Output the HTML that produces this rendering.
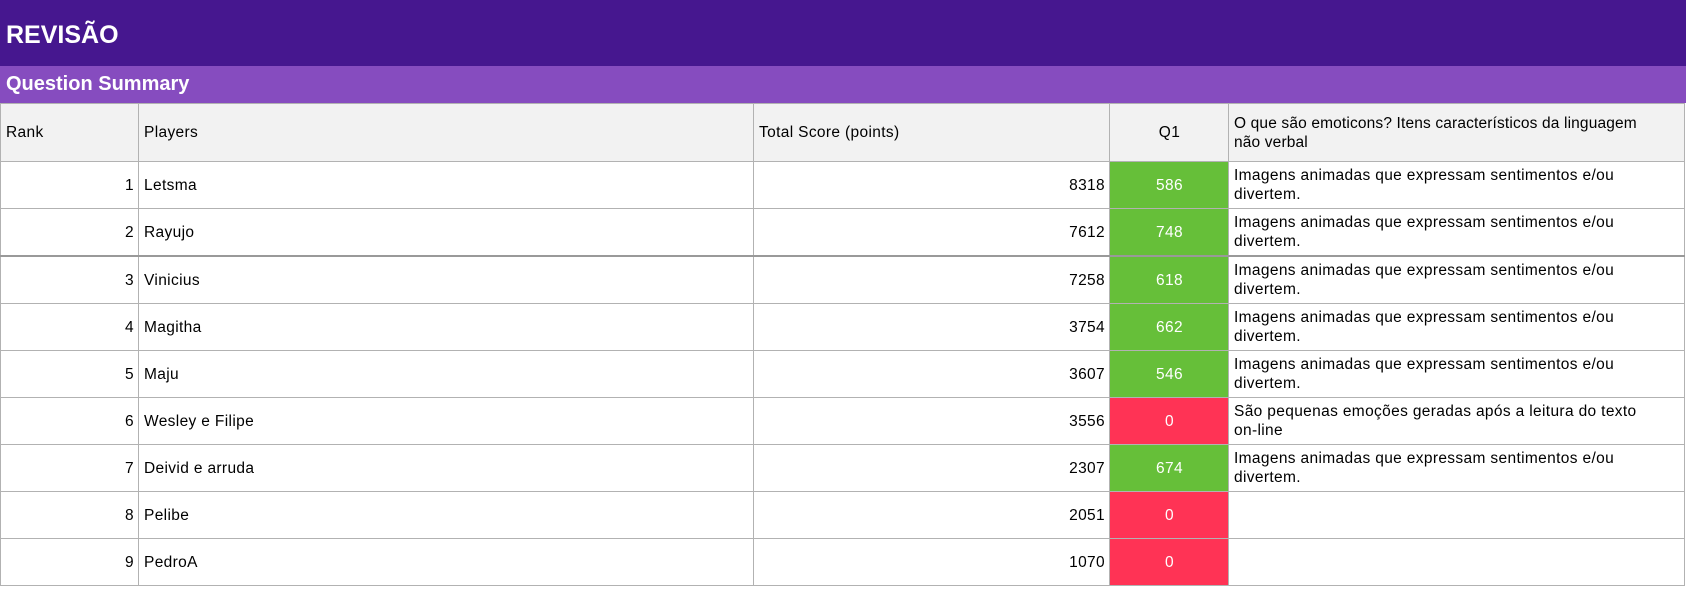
<!DOCTYPE html>
<html><head><meta charset="utf-8"><style>
body{margin:0;width:1686px;height:593px;background:#fff;font-family:"Liberation Sans",Arial,sans-serif;overflow:hidden;position:relative}
.t1{position:absolute;left:0;top:0;width:1686px;height:66px;background:#46178f;color:#fff;font-weight:bold;font-size:25px;line-height:70px;padding-left:6px;box-sizing:border-box}
.t2{position:absolute;left:0;top:66px;width:1686px;height:37px;background:#864cbf;color:#fff;font-weight:bold;font-size:20px;line-height:37px;padding-left:6px;box-sizing:border-box}
table{position:absolute;left:0;top:103px;border-collapse:collapse;table-layout:fixed;font-size:15.5px;letter-spacing:0.35px;color:#000}
td{border:1px solid #b2b2b2;padding:0 4px 0 5px;height:46px;line-height:19px;overflow:hidden;white-space:nowrap}
tr.h td{background:#f2f2f2;height:57px}
.r{text-align:right}.c{text-align:center;color:#fff}
.g{background:#66bf39}.x{background:#ff3355}
tr.b td{border-bottom:2px solid #999}
</style></head><body>
<div class="t1">REVISÃO</div>
<div class="t2">Question Summary</div>
<table>
<colgroup><col style="width:138px"><col style="width:615px"><col style="width:356px"><col style="width:119px"><col style="width:456px"></colgroup>
<tr class="h"><td>Rank</td><td>Players</td><td>Total Score (points)</td><td style="text-align:center">Q1</td><td style="letter-spacing:0.15px">O que são emoticons? Itens característicos da linguagem<br>não verbal</td></tr>
<tr><td class="r">1</td><td>Letsma</td><td class="r">8318</td><td class="c g">586</td><td>Imagens animadas que expressam sentimentos e/ou<br>divertem.</td></tr>
<tr class="b"><td class="r">2</td><td>Rayujo</td><td class="r">7612</td><td class="c g">748</td><td>Imagens animadas que expressam sentimentos e/ou<br>divertem.</td></tr>
<tr><td class="r">3</td><td>Vinicius</td><td class="r">7258</td><td class="c g">618</td><td>Imagens animadas que expressam sentimentos e/ou<br>divertem.</td></tr>
<tr><td class="r">4</td><td>Magitha</td><td class="r">3754</td><td class="c g">662</td><td>Imagens animadas que expressam sentimentos e/ou<br>divertem.</td></tr>
<tr><td class="r">5</td><td>Maju</td><td class="r">3607</td><td class="c g">546</td><td>Imagens animadas que expressam sentimentos e/ou<br>divertem.</td></tr>
<tr><td class="r">6</td><td>Wesley e Filipe</td><td class="r">3556</td><td class="c x">0</td><td>São pequenas emoções geradas após a leitura do texto<br>on-line</td></tr>
<tr><td class="r">7</td><td>Deivid e arruda</td><td class="r">2307</td><td class="c g">674</td><td>Imagens animadas que expressam sentimentos e/ou<br>divertem.</td></tr>
<tr><td class="r">8</td><td>Pelibe</td><td class="r">2051</td><td class="c x">0</td><td></td></tr>
<tr><td class="r">9</td><td>PedroA</td><td class="r">1070</td><td class="c x">0</td><td></td></tr>
</table>
</body></html>
